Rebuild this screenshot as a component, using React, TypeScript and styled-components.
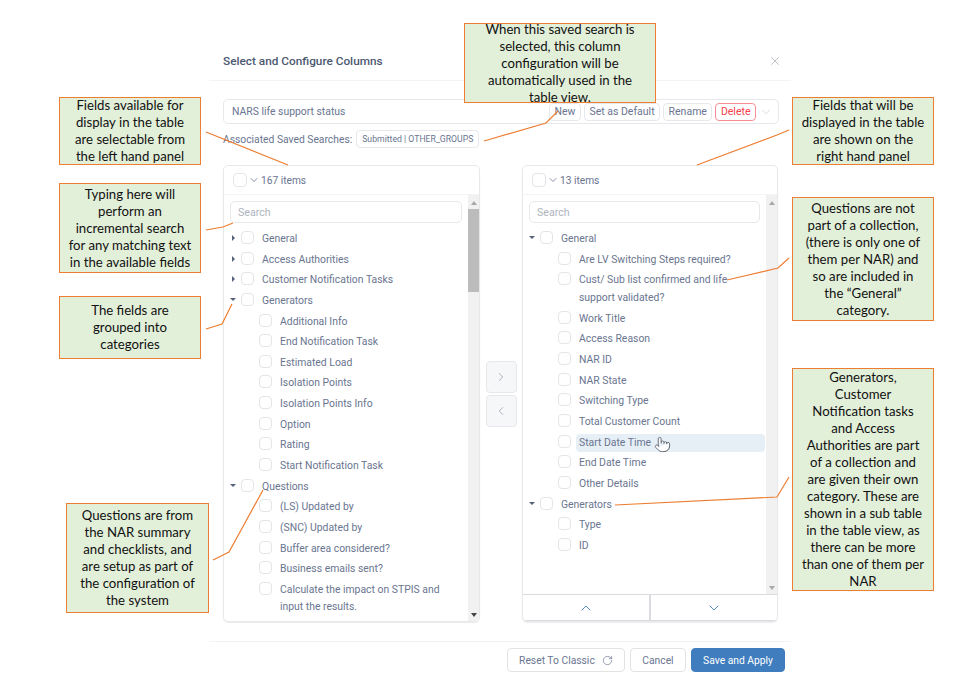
import React from "react";
import styled, { createGlobalStyle } from "styled-components";
import { ChevronDown, ChevronLeft, ChevronRight, ChevronUp, Pointer, RotateCw, X } from "lucide-react";

const GlobalStyle = createGlobalStyle`
  html, body {
    margin: 0;
    padding: 0;
    background: #fff;
  }
  body {
    font-family: Roboto, "Liberation Sans", sans-serif;
    color: #6a7590;
  }
`;

const Page = styled.div`
  position: relative;
  width: 962px;
  height: 682px;
  overflow: hidden;
  padding-left: 209px;
  box-sizing: border-box;
`;

const Dialog = styled.div`
  width: 582px;
  display: flex;
  flex-direction: column;
`;

const Header = styled.div`
  height: 81px;
  padding: 41px 9px 0 14px;
  box-sizing: border-box;
  display: flex;
  justify-content: space-between;
  align-items: center;
  border-bottom: 1px solid #f2f3f5;
`;

const Title = styled.div`
  font-size: 11.8px;
  font-weight: 500;
  color: #4c5870;
`;

const Body = styled.div`
  padding: 18px 12px 0 14px;
  height: 561px;
  box-sizing: border-box;
  border-bottom: 1px solid #f2f3f5;
`;

const NameBar = styled.div`
  height: 25px;
  box-sizing: border-box;
  border: 1px solid #e6e8ec;
  border-radius: 5px;
  display: flex;
  align-items: center;
  padding: 0 5px 0 8px;
  gap: 3px;
`;

const NameText = styled.div`
  flex: 1;
  font-size: 10.4px;
`;

const BarButton = styled.div<{ $danger?: boolean }>`
  height: 18px;
  min-width: 32px;
  box-sizing: border-box;
  padding: 0 4.5px;
  display: flex;
  align-items: center;
  justify-content: center;
  font-size: 10.5px;
  border-radius: 4px;
  border: 1px solid ${(p) => (p.$danger ? "#fb8d92" : "#e6e8ec")};
  color: ${(p) => (p.$danger ? "#f5414c" : "#6a7590")};
`;

const Associated = styled.div`
  margin-top: 7px;
  height: 16px;
  display: flex;
  align-items: center;
  gap: 4px;
  font-size: 10.3px;
`;

const Tag = styled.div`
  height: 16px;
  padding: 0 5px;
  display: flex;
  align-items: center;
  font-size: 8.7px;
  border: 1px solid #e6e8ec;
  border-radius: 4px;
`;

const Columns = styled.div`
  margin-top: 18px;
  display: grid;
  grid-template-columns: 257px 42px 256px;
`;

const Panel = styled.div`
  height: 457px;
  box-sizing: border-box;
  border: 1px solid #e6e8ec;
  border-radius: 5px;
  box-shadow: 0 1px 1px rgba(0, 0, 0, 0.08);
  display: flex;
  flex-direction: column;
  overflow: hidden;
`;

const PanelHead = styled.div`
  height: 28px;
  flex: none;
  display: flex;
  align-items: center;
  padding-left: 9px;
  gap: 1px;
  font-size: 10.2px;
  border-bottom: 1px solid #f3f4f6;
`;

const PanelMain = styled.div`
  flex: 1;
  min-height: 0;
  display: flex;
`;

const ListArea = styled.div`
  flex: 1;
  min-width: 0;
  overflow: hidden;
`;

const SearchBox = styled.div`
  margin: 6px 6px 5px 6px;
  height: 22px;
  box-sizing: border-box;
  border: 1px solid #e6e8ec;
  border-radius: 5px;
  padding-left: 7px;
  display: flex;
  align-items: center;
  font-size: 10.6px;
  color: #adb3bd;
`;

const Scrollbar = styled.div`
  width: 11px;
  flex: none;
  background: #f1f1f1;
  display: flex;
  flex-direction: column;
  align-items: center;
  justify-content: space-between;
`;

const ScrollUp = styled.div`
  margin-top: 6px;
  width: 0;
  height: 0;
  border-left: 3px solid transparent;
  border-right: 3px solid transparent;
  border-bottom: 4px solid #a8a8a8;
`;

const ScrollDown = styled.div<{ $dark?: boolean }>`
  margin-bottom: 4px;
  width: 0;
  height: 0;
  border-left: 3px solid transparent;
  border-right: 3px solid transparent;
  border-top: 4px solid ${(p) => (p.$dark ? "#444" : "#a8a8a8")};
`;

const ScrollThumb = styled.div`
  width: 100%;
  height: 83px;
  margin-top: 4px;
  background: #bcbcbc;
`;

const ScrollFill = styled.div`
  flex: 1;
`;

const Row = styled.div<{ $child?: boolean; $double?: boolean }>`
  position: relative;
  height: ${(p) => (p.$double ? "38.5px" : "20.65px")};
  display: flex;
  align-items: flex-start;
  padding-left: ${(p) => (p.$child ? "35px" : "17px")};
  font-size: 10.4px;
  line-height: 17.5px;
  box-sizing: border-box;
  padding-top: 2px;
`;

const Caret = styled.div<{ $open?: boolean }>`
  position: absolute;
  width: 0;
  height: 0;
  ${(p) =>
    p.$open
      ? `border-left: 3px solid transparent;
         border-right: 3px solid transparent;
         border-top: 3.5px solid #56617a;
         left: 6px;
         top: 8px;`
      : `border-top: 3px solid transparent;
         border-bottom: 3px solid transparent;
         border-left: 3.5px solid #56617a;
         left: 8px;
         top: 7px;`}
`;

const Check = styled.div`
  width: 13px;
  height: 13px;
  flex: none;
  box-sizing: border-box;
  border: 1px solid #e3e5e9;
  border-radius: 4px;
  background: #fff;
  margin-top: 1px;
`;

const HeadCheck = styled(Check)`
  margin: 0;
  width: 14px;
  height: 14px;
`;

const RowLabel = styled.div<{ $hover?: boolean }>`
  margin-left: 5px;
  padding-left: 3px;
  flex: ${(p) => (p.$hover ? 1 : "none")};
  max-width: ${(p) => (p.$hover ? "none" : "166px")};
  margin-right: ${(p) => (p.$hover ? "1px" : "0")};
  height: ${(p) => (p.$hover ? "18px" : "auto")};
  background: ${(p) => (p.$hover ? "#e6eef6" : "transparent")};
  border-radius: 4px;
`;

const MoveColumn = styled.div`
  display: flex;
  flex-direction: column;
  align-items: center;
  gap: 2px;
  padding-top: 196px;
`;

const MoveButton = styled.div`
  width: 31px;
  height: 32px;
  box-sizing: border-box;
  border: 1px solid #e6e8ec;
  border-radius: 4px;
  background: #f6f7f8;
  display: flex;
  align-items: center;
  justify-content: center;
  color: #a3a9b5;
`;

const OrderBar = styled.div`
  height: 25px;
  flex: none;
  display: grid;
  grid-template-columns: 128px 1fr;
  border-top: 1px solid #d9dbdf;
  border-bottom: 1px solid #d9dbdf;
  color: #4a86c5;
`;

const OrderButton = styled.div<{ $first?: boolean }>`
  display: flex;
  align-items: center;
  justify-content: center;
  border-right: ${(p) => (p.$first ? "2px solid #d9dbdf" : "none")};
`;

const Footer = styled.div`
  height: 40px;
  display: flex;
  justify-content: flex-end;
  align-items: flex-start;
  padding: 6px 6px 0 0;
  gap: 5.5px;
`;

const FooterButton = styled.div<{ $primary?: boolean }>`
  height: 24px;
  box-sizing: border-box;
  padding: 0 11px;
  display: flex;
  align-items: center;
  gap: 7px;
  font-size: 10.3px;
  border-radius: 4px;
  border: 1px solid ${(p) => (p.$primary ? "#3f7dbe" : "#e3e3e3")};
  background: ${(p) => (p.$primary ? "#3f7dbe" : "#fff")};
  color: ${(p) => (p.$primary ? "#fff" : "#6a7590")};
`;

const HandCursor = styled.div`
  position: absolute;
  left: 654px;
  top: 436px;
  color: #5c6470;
  line-height: 0;
`;

const Callout = styled.div<{ $x: number; $y: number; $w: number; $h: number }>`
  position: absolute;
  left: ${(p) => p.$x}px;
  top: ${(p) => p.$y}px;
  width: ${(p) => p.$w}px;
  height: ${(p) => p.$h}px;
  box-sizing: border-box;
  border: 1.5px solid #ed7d31;
  background: #e2efd9;
  font-family: Lato, "Open Sans", sans-serif;
  font-size: 13.2px;
  line-height: 17px;
  color: #111;
  text-align: center;
  white-space: pre-line;
  display: flex;
  align-items: center;
  justify-content: center;
`;

const Leaders = styled.svg`
  position: absolute;
  inset: 0;
  pointer-events: none;
`;

type Item = { label: string; child?: boolean; open?: boolean; closed?: boolean; double?: boolean; hover?: boolean };

const leftItems: Item[] = [
  { label: "General", closed: true },
  { label: "Access Authorities", closed: true },
  { label: "Customer Notification Tasks", closed: true },
  { label: "Generators", open: true },
  { label: "Additional Info", child: true },
  { label: "End Notification Task", child: true },
  { label: "Estimated Load", child: true },
  { label: "Isolation Points", child: true },
  { label: "Isolation Points Info", child: true },
  { label: "Option", child: true },
  { label: "Rating", child: true },
  { label: "Start Notification Task", child: true },
  { label: "Questions", open: true },
  { label: "(LS) Updated by", child: true },
  { label: "(SNC) Updated by", child: true },
  { label: "Buffer area considered?", child: true },
  { label: "Business emails sent?", child: true },
  { label: "Calculate the impact on STPIS and input the results.", child: true, double: true },
];

const rightItems: Item[] = [
  { label: "General", open: true },
  { label: "Are LV Switching Steps required?", child: true },
  { label: "Cust/ Sub list confirmed and life support validated?", child: true, double: true },
  { label: "Work Title", child: true },
  { label: "Access Reason", child: true },
  { label: "NAR ID", child: true },
  { label: "NAR State", child: true },
  { label: "Switching Type", child: true },
  { label: "Total Customer Count", child: true },
  { label: "Start Date Time", child: true, hover: true },
  { label: "End Date Time", child: true },
  { label: "Other Details", child: true },
  { label: "Generators", open: true },
  { label: "Type", child: true },
  { label: "ID", child: true },
];

const callouts = [
  { x: 59, y: 97, w: 142, h: 68, text: "Fields available for\ndisplay in the table\nare selectable from\nthe left hand panel" },
  { x: 59, y: 183, w: 142, h: 90, text: "Typing here will\nperform an\nincremental search\nfor any matching text\nin the available fields" },
  { x: 59, y: 296, w: 142, h: 63, text: "The fields are\ngrouped into\ncategories" },
  { x: 66, y: 503, w: 143, h: 110, text: "Questions are from\nthe NAR summary\nand checklists, and\nare setup as part of\nthe configuration of\nthe system" },
  { x: 464, y: 23, w: 192, h: 80, text: "When this saved search is\nselected, this column\nconfiguration will be\nautomatically used in the\ntable view." },
  { x: 792, y: 97, w: 142, h: 68, text: "Fields that will be\ndisplayed in the table\nare shown on the\nright hand panel" },
  { x: 792, y: 197, w: 142, h: 124, text: "Questions are not\npart of a collection,\n(there is only one of\nthem per NAR) and\nso are included in\nthe “General”\ncategory." },
  { x: 792, y: 368, w: 142, h: 223, text: "Generators,\nCustomer\nNotification tasks\nand Access\nAuthorities are part\nof a collection and\nare given their own\ncategory. These are\nshown in a sub table\nin the table view, as\nthere can be more\nthan one of them per\nNAR" },
];

const leaderLines = [
  "206,132 288,165",
  "206,230 223,227 233,223",
  "206,329 222,324 232,304",
  "213,560 229,552 263,490",
  "484,141 546,123 558,111",
  "697,165 777,135 789,130",
  "727,280 778,268 789,258",
  "615,505 777,497 789,477",
];

function TreeRows({ items }: { items: Item[] }) {
  return (
    <>
      {items.map((item) => (
        <Row key={item.label} $child={item.child} $double={item.double}>
          {item.open && <Caret $open />}
          {item.closed && <Caret />}
          <Check />
          <RowLabel $hover={item.hover}>{item.label}</RowLabel>
        </Row>
      ))}
    </>
  );
}

function App() {
  return (
    <Page>
      <GlobalStyle />
      <Dialog>
        <Header>
          <Title>Select and Configure Columns</Title>
          <X size={14} color="#a9aeb8" strokeWidth={1.3} />
        </Header>
        <Body>
          <NameBar>
            <NameText>NARS life support status</NameText>
            <BarButton>New</BarButton>
            <BarButton>Set as Default</BarButton>
            <BarButton>Rename</BarButton>
            <BarButton $danger>Delete</BarButton>
            <ChevronDown size={14} color="#ced2d9" strokeWidth={1.3} />
          </NameBar>
          <Associated>
            Associated Saved Searches:
            <Tag>Submitted | OTHER_GROUPS</Tag>
          </Associated>
          <Columns>
            <Panel>
              <PanelHead>
                <HeadCheck />
                <ChevronDown size={12} strokeWidth={1.6} />
                167 items
              </PanelHead>
              <PanelMain>
                <ListArea>
                  <SearchBox>Search</SearchBox>
                  <TreeRows items={leftItems} />
                </ListArea>
                <Scrollbar>
                  <ScrollUp />
                  <ScrollThumb />
                  <ScrollFill />
                  <ScrollDown $dark />
                </Scrollbar>
              </PanelMain>
            </Panel>
            <MoveColumn>
              <MoveButton>
                <ChevronRight size={14} strokeWidth={1.5} />
              </MoveButton>
              <MoveButton>
                <ChevronLeft size={14} strokeWidth={1.5} />
              </MoveButton>
            </MoveColumn>
            <Panel>
              <PanelHead>
                <HeadCheck />
                <ChevronDown size={12} strokeWidth={1.6} />
                13 items
              </PanelHead>
              <PanelMain>
                <ListArea>
                  <SearchBox>Search</SearchBox>
                  <TreeRows items={rightItems} />
                </ListArea>
                <Scrollbar>
                  <ScrollUp />
                  <ScrollDown />
                </Scrollbar>
              </PanelMain>
              <OrderBar>
                <OrderButton $first>
                  <ChevronUp size={16} strokeWidth={1.4} />
                </OrderButton>
                <OrderButton>
                  <ChevronDown size={16} strokeWidth={1.4} />
                </OrderButton>
              </OrderBar>
            </Panel>
          </Columns>
        </Body>
        <Footer>
          <FooterButton>
            Reset To Classic
            <RotateCw size={11} strokeWidth={1.5} />
          </FooterButton>
          <FooterButton>Cancel</FooterButton>
          <FooterButton $primary>Save and Apply</FooterButton>
        </Footer>
      </Dialog>
      <HandCursor>
        <Pointer size={17} strokeWidth={1.3} fill="#fff" />
      </HandCursor>
      <Leaders width={962} height={682}>
        {leaderLines.map((points) => (
          <polyline key={points} points={points} fill="none" stroke="#ed7d31" strokeWidth={1.2} />
        ))}
      </Leaders>
      {callouts.map((c) => (
        <Callout key={c.text} $x={c.x} $y={c.y} $w={c.w} $h={c.h}>
          {c.text}
        </Callout>
      ))}
    </Page>
  );
}

export default App;
